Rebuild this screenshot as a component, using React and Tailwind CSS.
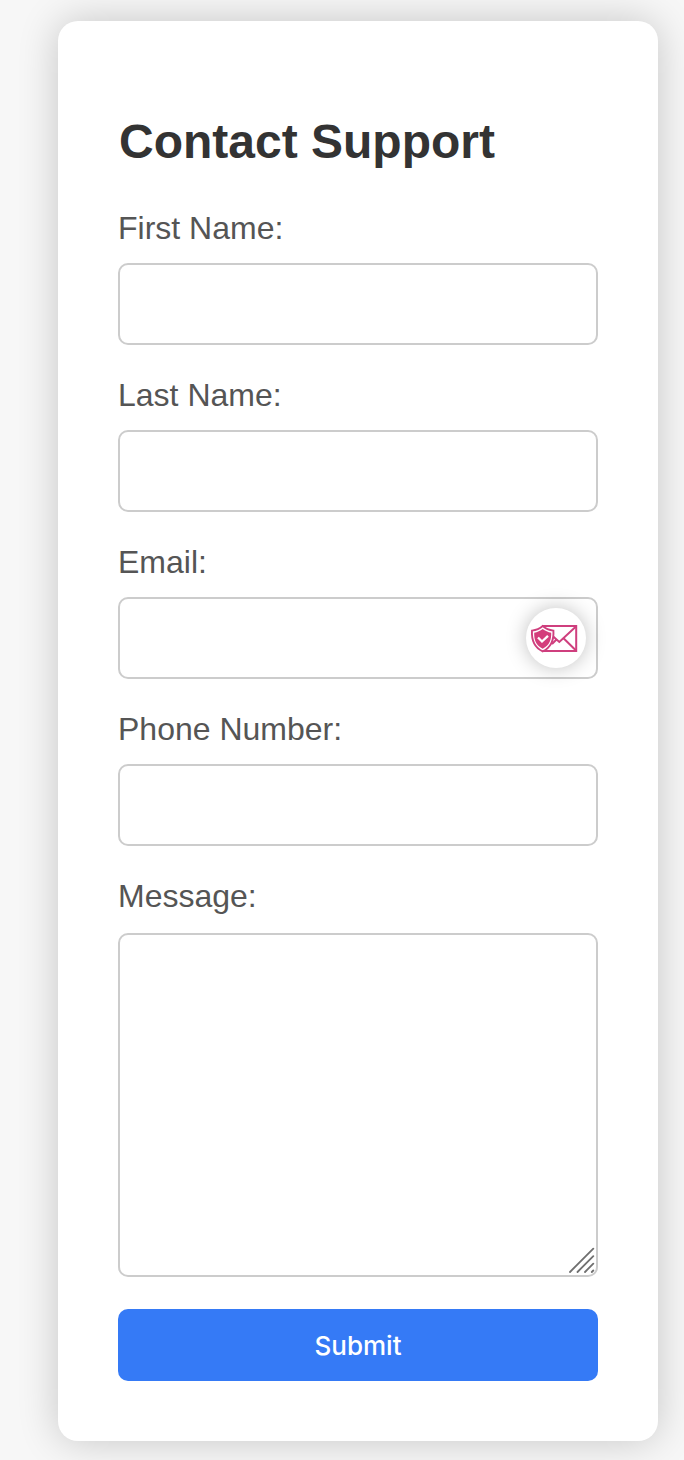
const fields = [
  { id: "first-name", label: "First Name:", type: "text" },
  { id: "last-name", label: "Last Name:", type: "text" },
  { id: "email", label: "Email:", type: "email", badge: true },
  { id: "phone", label: "Phone Number:", type: "tel" },
];

function ShieldMailBadge() {
  return (
    <span className="absolute top-[11px] right-3 flex size-[60px] items-center justify-center rounded-full bg-white shadow-[0_0_20px_rgba(0,0,0,0.25)]">
      <svg className="size-[60px]" viewBox="0 0 60 60" fill="none" aria-hidden="true">
        <g stroke="#cf3f7e" strokeWidth="2">
          <path d="M16 18H50.2V43H16" />
          <path d="M50 18.5L33.3 34L27.5 28.8M37.5 30.2L50 42.5M30.5 31.5L26 36" />
        </g>
        <path
          d="M16.7 18C13.9 20.6 9.8 22.2 6 22.6C5.4 31.8 7.8 39.2 16.7 43.4C25.6 39.2 28 31.8 27.4 22.6C23.6 22.2 19.5 20.6 16.7 18Z"
          fill="white"
          stroke="#cf3f7e"
          strokeWidth="1.9"
        />
        <path
          d="M16.7 21C14.4 22.9 11.3 24.2 8.2 24.7C8 31.8 9.8 37.2 16.7 40.7C23.6 37.2 25.4 31.8 25.2 24.7C22.1 24.2 19 22.9 16.7 21Z"
          fill="#d43d7b"
        />
        <path d="M12 29.5L16 33.5L22 27.8" stroke="white" strokeWidth="2.3" />
      </svg>
    </span>
  );
}

function ResizeGrip() {
  return (
    <svg
      className="pointer-events-none absolute right-[3px] bottom-[3px] h-[27px] w-[27px]"
      viewBox="0 0 27 27"
      stroke="#707070"
      strokeWidth="1.8"
      strokeLinecap="round"
      aria-hidden="true"
    >
      <path d="M2 25L25.3 1.7M9.5 25L25.3 9.2M17 25L25.3 16.7M23.8 25L25.3 23.5" />
    </svg>
  );
}

const labelClass = "mb-4 block h-[37px] text-[32px] leading-[37px] text-[#555]";
const controlClass = "block w-full rounded-[10px] border-2 border-[#ccc] bg-white px-4 text-[27px] outline-none";

export default function App() {
  return (
    <main className="h-[1460px] w-full overflow-hidden bg-[#f7f7f7] pt-[21px] pl-[58px] font-['Liberation_Sans',Arial,sans-serif]">
      <form className="h-[1420px] w-[600px] rounded-[20px] bg-white px-[60px] pt-[93px] shadow-[0_0_40px_rgba(0,0,0,0.2)]">
        <h2 className="mb-10 pl-px text-[48px] leading-[56px] font-bold text-[#333]">Contact Support</h2>
        {fields.map((field) => (
          <div key={field.id} className="mb-8">
            <label htmlFor={field.id} className={labelClass}>
              {field.label}
            </label>
            <div className="relative">
              <input id={field.id} type={field.type} className={`${controlClass} h-[82px]`} />
              {field.badge && <ShieldMailBadge />}
            </div>
          </div>
        ))}
        <div className="mb-8">
          <label htmlFor="message" className={labelClass}>
            Message:
          </label>
          <div className="relative mt-[18px]">
            <textarea id="message" className={`${controlClass} h-[344px] resize-none`} />
            <ResizeGrip />
          </div>
        </div>
        <button
          type="button"
          className="block h-[72px] w-full rounded-[10px] bg-[#357af6] font-['Inter',sans-serif] text-[26px] font-medium text-white"
        >
          Submit
        </button>
      </form>
    </main>
  );
}
